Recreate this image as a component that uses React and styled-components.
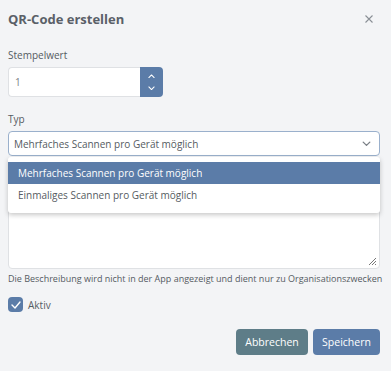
import styled, { createGlobalStyle } from "styled-components";

const GlobalStyle = createGlobalStyle`
  html, body {
    margin: 0;
    padding: 0;
    background: #f3f4f6;
  }
  body {
    font-family: "Open Sans", "Noto Sans", sans-serif;
    color: #555b62;
  }
`;

const Dialog = styled.div`
  box-sizing: border-box;
  width: 391px;
  height: 371px;
  padding: 0 11px 0 8px;
  display: flex;
  flex-direction: column;
`;

const Header = styled.div`
  display: flex;
  align-items: center;
  justify-content: space-between;
  height: 38px;
`;

const Title = styled.h1`
  margin: 0;
  font-size: 13px;
  font-weight: 700;
  color: #5a6068;
`;

const Close = styled.button`
  border: none;
  background: none;
  padding: 0;
  margin-right: 6px;
  width: 10px;
  height: 10px;
  display: flex;
`;

const Field = styled.div`
  display: flex;
  flex-direction: column;
  margin-top: ${(p) => p.$top || 0}px;
  position: relative;
`;

const Label = styled.label`
  font-size: 10px;
  line-height: 13px;
  margin-bottom: 5px;
  color: #555b62;
`;

const NumberRow = styled.div`
  display: flex;
  height: 30px;
`;

const NumberInput = styled.div`
  box-sizing: border-box;
  width: 132px;
  border: 1px solid #dfe1e4;
  border-right: none;
  border-radius: 4px 0 0 4px;
  background: #fff;
  font-size: 10px;
  color: #7a7f86;
  display: flex;
  align-items: center;
  padding-left: 6px;
`;

const Spinner = styled.div`
  width: 23px;
  background: #5b7ca8;
  border-radius: 0 4px 4px 0;
  display: flex;
  flex-direction: column;
  align-items: center;
  justify-content: space-evenly;
`;

const Select = styled.div`
  box-sizing: border-box;
  height: 25px;
  border: 1px solid #9ab0cc;
  border-radius: 4px;
  background: #fff;
  display: flex;
  align-items: center;
  justify-content: space-between;
  padding: 0 8px 0 5px;
  font-size: 10px;
  color: #555b62;
`;

const Menu = styled.ul`
  position: absolute;
  left: 0;
  right: 0;
  top: 44px;
  margin: 0;
  padding: 5px 0 7px;
  list-style: none;
  background: #fff;
  border-radius: 3px;
  box-shadow: 0 2px 5px rgba(0, 0, 0, 0.22);
  z-index: 2;
`;

const Option = styled.li`
  height: 22px;
  display: flex;
  align-items: center;
  padding-left: 10px;
  font-size: 10px;
  background: ${(p) => (p.$active ? "#5b7ca8" : "transparent")};
  color: ${(p) => (p.$active ? "#fff" : "#555b62")};
`;

const TextArea = styled.div`
  box-sizing: border-box;
  height: 99px;
  margin-top: 14px;
  border: 1px solid #dfe1e4;
  border-radius: 4px;
  background: #fff;
  position: relative;
`;

const Grip = styled.svg`
  position: absolute;
  right: 2px;
  bottom: 2px;
`;

const Help = styled.div`
  font-size: 9px;
  line-height: 12px;
  margin-top: 4px;
  color: #555b62;
  white-space: nowrap;
`;

const CheckRow = styled.div`
  display: flex;
  align-items: center;
  gap: 5px;
  margin-top: 12px;
  font-size: 10px;
`;

const Box = styled.span`
  width: 15px;
  height: 15px;
  border-radius: 4px;
  background: #5b7ca8;
  display: flex;
  align-items: center;
  justify-content: center;
`;

const Footer = styled.div`
  display: flex;
  justify-content: flex-end;
  gap: 5px;
  margin-top: 17px;
`;

const Button = styled.button`
  height: 26px;
  border: none;
  border-radius: 4px;
  padding: 0 8px;
  font-family: inherit;
  font-size: 10.5px;
  color: #fff;
  background: ${(p) => (p.$secondary ? "#5e7d88" : "#5b7ca8")};
  min-width: ${(p) => p.$w}px;
`;

const Chevron = ({ up, size = 8, stroke = "#fff" }) => (
  <svg width={size} height={size / 2 + 1} viewBox="0 0 8 5" fill="none">
    <path
      d={up ? "M1 4 L4 1 L7 4" : "M1 1 L4 4 L7 1"}
      stroke={stroke}
      strokeWidth="1.2"
      strokeLinecap="round"
      strokeLinejoin="round"
    />
  </svg>
);

export default function App() {
  return (
    <>
      <GlobalStyle />
      <Dialog>
        <Header>
          <Title>QR-Code erstellen</Title>
          <Close aria-label="close">
            <svg width="10" height="10" viewBox="0 0 10 10">
              <path d="M1.5 1.5 L8.5 8.5 M8.5 1.5 L1.5 8.5" stroke="#8a8f96" strokeWidth="1.1" />
            </svg>
          </Close>
        </Header>

        <Field $top={11}>
          <Label>Stempelwert</Label>
          <NumberRow>
            <NumberInput>1</NumberInput>
            <Spinner>
              <Chevron up size={7} />
              <Chevron size={7} />
            </Spinner>
          </NumberRow>
        </Field>

        <Field $top={16}>
          <Label>Typ</Label>
          <Select>
            <span>Mehrfaches Scannen pro Gerät möglich</span>
            <Chevron size={9} stroke="#7a7f86" />
          </Select>
          <Menu>
            <Option $active>Mehrfaches Scannen pro Gerät möglich</Option>
            <Option>Einmaliges Scannen pro Gerät möglich</Option>
          </Menu>
        </Field>

        <TextArea>
          <Grip width="10" height="10" viewBox="0 0 10 10">
            <path d="M9 2 L2 9 M9 5 L5 9 M9 8 L8 9" stroke="#777" strokeWidth="1" />
          </Grip>
        </TextArea>

        <Help>Die Beschreibung wird nicht in der App angezeigt und dient nur zu Organisationszwecken</Help>

        <CheckRow>
          <Box>
            <svg width="10" height="8" viewBox="0 0 10 8" fill="none">
              <path d="M1 4 L4 7 L9 1" stroke="#fff" strokeWidth="1.4" strokeLinecap="round" strokeLinejoin="round" />
            </svg>
          </Box>
          <span>Aktiv</span>
        </CheckRow>

        <Footer>
          <Button $secondary $w={72}>Abbrechen</Button>
          <Button $w={67}>Speichern</Button>
        </Footer>
      </Dialog>
    </>
  );
}
